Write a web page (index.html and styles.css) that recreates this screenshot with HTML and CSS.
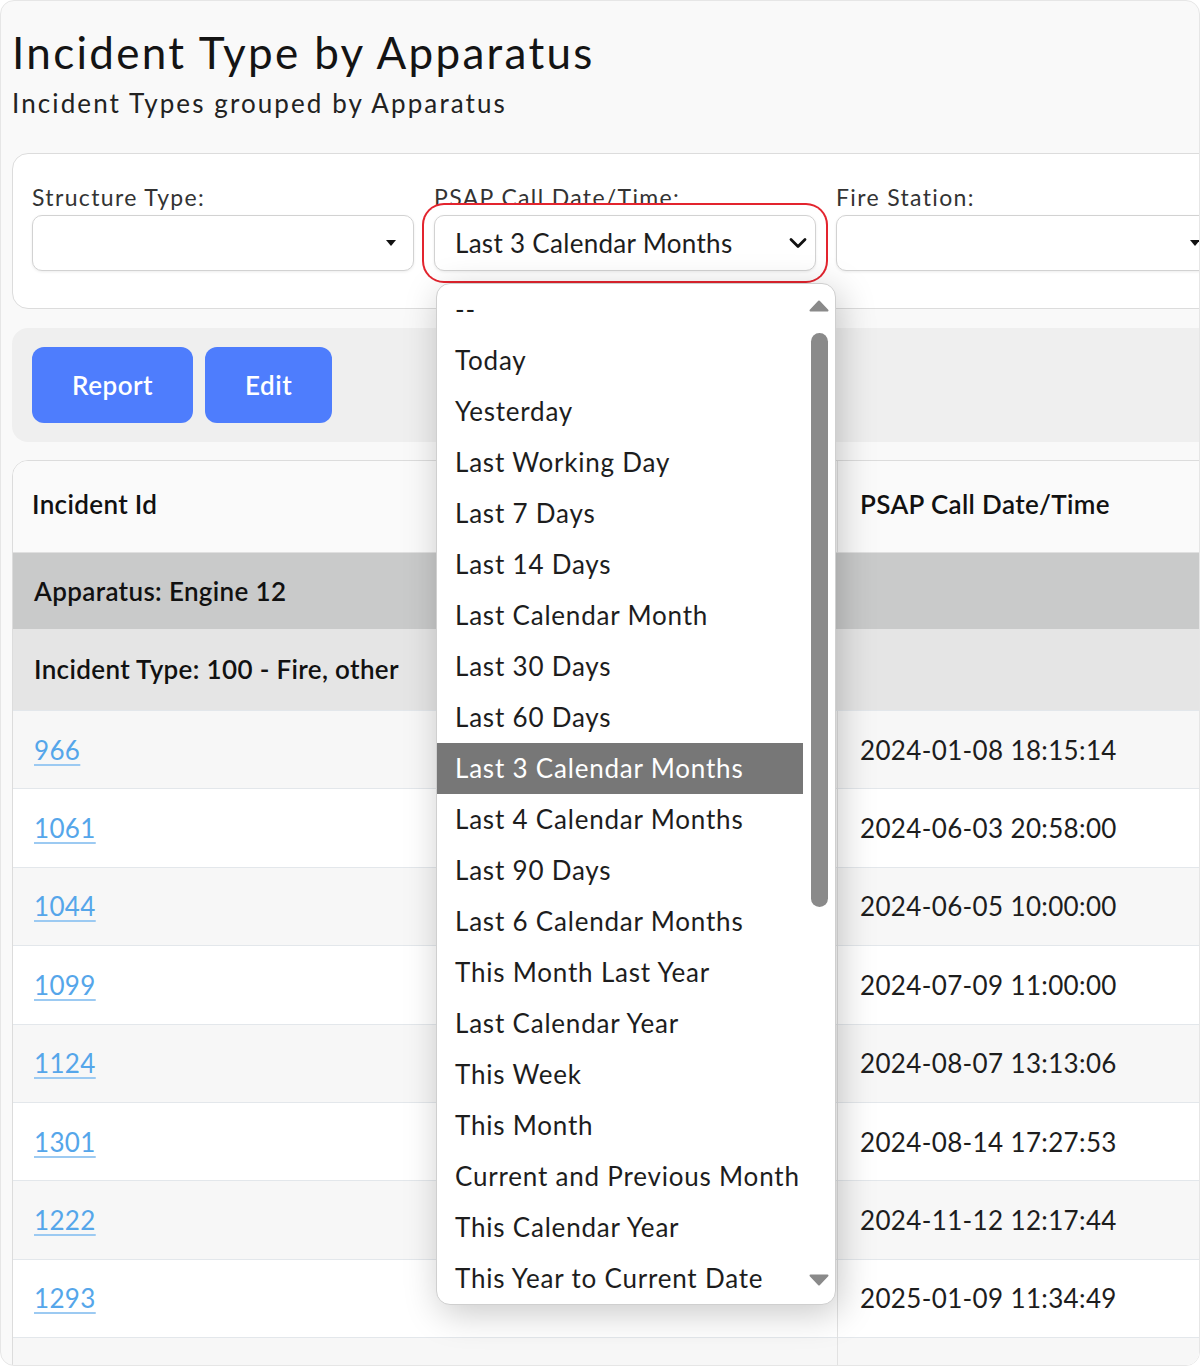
FILE: index.html
```html
<!DOCTYPE html>
<html lang="en">
<head>
    <meta charset="UTF-8">
    <meta name="viewport" content="width=device-width, initial-scale=1.0">
    <title>Incident Type by Apparatus</title>
    <link rel="stylesheet" href="styles.css">
</head>
<body>
    <div class="page">
        <h1 class="title">Incident Type by Apparatus</h1>
        <p class="subtitle">Incident Types grouped by Apparatus</p>

        <!-- report filters -->
        <div class="filters">
            <div class="field">
                <label>Structure Type:</label>
                <div class="select"><span class="caret"></span></div>
            </div>
            <div class="field">
                <label>PSAP Call Date/Time:</label>
                <div class="select focused">
                    <span>Last 3 Calendar Months</span>
                    <svg class="chevron" width="18" height="12" viewBox="0 0 18 12"><path d="M2 2.5 L9 9.5 L16 2.5" fill="none" stroke="#111" stroke-width="2.8" stroke-linecap="round" stroke-linejoin="round"/></svg>
                </div>
                <div class="options">
                    <ul class="option-list">
                        <li>--</li>
                        <li>Today</li>
                        <li>Yesterday</li>
                        <li>Last Working Day</li>
                        <li>Last 7 Days</li>
                        <li>Last 14 Days</li>
                        <li>Last Calendar Month</li>
                        <li>Last 30 Days</li>
                        <li>Last 60 Days</li>
                        <li class="selected">Last 3 Calendar Months</li>
                        <li>Last 4 Calendar Months</li>
                        <li>Last 90 Days</li>
                        <li>Last 6 Calendar Months</li>
                        <li>This Month Last Year</li>
                        <li>Last Calendar Year</li>
                        <li>This Week</li>
                        <li>This Month</li>
                        <li>Current and Previous Month</li>
                        <li>This Calendar Year</li>
                        <li>This Year to Current Date</li>
                    </ul>
                    <div class="scrollbar">
                        <svg width="20" height="12" viewBox="0 0 20 12"><path d="M10 1.5 L18.5 10.5 L1.5 10.5 Z" fill="#8a8a8a" stroke="#8a8a8a" stroke-width="2" stroke-linejoin="round"/></svg>
                        <div class="thumb"></div>
                        <div class="track-rest"></div>
                        <svg width="20" height="12" viewBox="0 0 20 12"><path d="M10 10.5 L18.5 1.5 L1.5 1.5 Z" fill="#8a8a8a" stroke="#8a8a8a" stroke-width="2" stroke-linejoin="round"/></svg>
                    </div>
                </div>
            </div>
            <div class="field">
                <label>Fire Station:</label>
                <div class="select"><span class="caret"></span></div>
            </div>
        </div>

        <div class="actions">
            <button class="btn">Report</button>
            <button class="btn">Edit</button>
        </div>

        <div class="table-card">
            <table class="report">
                <thead>
                    <tr>
                        <th class="col-id">Incident Id</th>
                        <th class="col-date">PSAP Call Date/Time</th>
                    </tr>
                </thead>
                <tbody>
                    <tr class="group-apparatus"><td colspan="2">Apparatus: Engine 12</td></tr>
                    <tr class="group-type"><td colspan="2">Incident Type: 100 - Fire, other</td></tr>
                    <tr><td><a href="#">966</a></td><td class="col-date">2024-01-08 18:15:14</td></tr>
                    <tr><td><a href="#">1061</a></td><td class="col-date">2024-06-03 20:58:00</td></tr>
                    <tr><td><a href="#">1044</a></td><td class="col-date">2024-06-05 10:00:00</td></tr>
                    <tr><td><a href="#">1099</a></td><td class="col-date">2024-07-09 11:00:00</td></tr>
                    <tr><td><a href="#">1124</a></td><td class="col-date">2024-08-07 13:13:06</td></tr>
                    <tr><td><a href="#">1301</a></td><td class="col-date">2024-08-14 17:27:53</td></tr>
                    <tr><td><a href="#">1222</a></td><td class="col-date">2024-11-12 12:17:44</td></tr>
                    <tr><td><a href="#">1293</a></td><td class="col-date">2025-01-09 11:34:49</td></tr>
                    <tr><td><a href="#">1324</a></td><td class="col-date">2025-01-21 09:45:12</td></tr>
                </tbody>
            </table>
        </div>
    </div>
</body>
</html>
```

FILE: styles.css
```css
/* styles.css */
body {
    margin: 0;
    background-color: #ffffff;
    font-family: Lato, "Noto Sans", sans-serif;
    color: #1d1d1d;
}

.page {
    width: 1200px;
    height: 1366px;
    box-sizing: border-box;
    border: 1px solid #e6e6e6;
    border-radius: 14px;
    background-color: #f9f9f9;
    overflow: hidden;
    padding: 25px 0 0 11px;
}

.title {
    margin: 0;
    font-size: 44px;
    line-height: 1.2;
    font-weight: 400;
    letter-spacing: 2.3px;
    color: #141414;
}

.subtitle {
    margin: 9px 0 0;
    font-size: 26px;
    line-height: 1.2;
    letter-spacing: 2.1px;
    color: #222;
}

/* filters */
.filters {
    margin-top: 34px;
    width: 1240px;
    background-color: #fff;
    border: 1px solid #dcdcdc;
    border-radius: 16px;
    padding: 29px 19px 37px;
    display: flex;
    gap: 20px;
}

.field {
    width: 382px;
    flex-shrink: 0;
    position: relative;
}

.field label {
    display: block;
    font-size: 23px;
    line-height: 28px;
    letter-spacing: 1.35px;
    color: #333;
    margin-bottom: 4px;
}

.select {
    height: 56px;
    box-sizing: border-box;
    border: 1px solid #d2d2d2;
    border-radius: 10px;
    background-color: #fff;
    box-shadow: 0 1px 3px rgba(0, 0, 0, 0.08);
    display: flex;
    align-items: center;
    justify-content: space-between;
    padding: 0 17px 0 20px;
    font-size: 26px;
    letter-spacing: 0.3px;
    color: #1d1d1d;
}

.select.focused {
    position: relative;
    padding-right: 8px;
    box-shadow: 0 1px 3px rgba(0, 0, 0, 0.08), 0 0 0 10px #fff, 0 0 0 12px #e3242e;
}

.caret {
    margin-left: auto;
    width: 0;
    height: 0;
    border-left: 5px solid transparent;
    border-right: 5px solid transparent;
    border-top: 6px solid #111;
}

/* open option list of the date select */
.options {
    position: absolute;
    top: 100px;
    left: 2px;
    z-index: 5;
    width: 400px;
    box-sizing: border-box;
    display: flex;
    background-color: #fff;
    border: 1px solid #cfcfcf;
    border-radius: 14px;
    box-shadow: 4px 8px 36px rgba(0, 0, 0, 0.22);
    overflow: hidden;
}

.option-list {
    list-style: none;
    margin: 0;
    padding: 0;
    width: 366px;
}

.option-list li {
    height: 51px;
    line-height: 51px;
    padding-left: 18px;
    font-size: 26px;
    letter-spacing: 0.8px;
    color: #1d1d1d;
    white-space: nowrap;
}

.option-list li.selected {
    background-color: #777;
    color: #fff;
}

.scrollbar {
    flex: 1;
    display: flex;
    flex-direction: column;
    align-items: center;
    padding: 16px 0 18px;
}

.thumb {
    margin-top: 21px;
    width: 17px;
    height: 574px;
    border-radius: 9px;
    background-color: #8a8a8a;
}

.track-rest {
    flex: 1;
}

/* action bar */
.actions {
    margin-top: 19px;
    width: 1240px;
    background-color: #efefef;
    border-radius: 16px;
    padding: 19px 20px;
    display: flex;
    gap: 12px;
}

.btn {
    height: 76px;
    padding: 0 40px;
    border: none;
    border-radius: 12px;
    background-color: #4e7dfd;
    color: #fff;
    font-family: Lato, "Noto Sans", sans-serif;
    font-size: 26px;
    font-weight: 600;
    letter-spacing: 0.5px;
    cursor: pointer;
}

/* results table */
.table-card {
    margin-top: 18px;
    width: 1240px;
    background-color: #fff;
    border: 1px solid #dcdcdc;
    border-radius: 16px;
    overflow: hidden;
}

.report {
    width: 100%;
    border-collapse: collapse;
    font-size: 26px;
    letter-spacing: 0.35px;
}

.report th {
    height: 87px;
    background-color: #fafafa;
    text-align: left;
    font-weight: 600;
    color: #111;
    padding: 0 19px 4px;
    border-bottom: 1px solid #e0e0e0;
}

.report .col-id {
    width: 786px;
}

.report .col-date {
    border-left: 1px solid #e2e2e2;
    padding-left: 22px;
}

.report td {
    height: 77.4px;
    padding: 0 21px;
    border-top: 1px solid #e3e7eb;
    white-space: nowrap;
}

.report tbody tr:nth-child(odd) td {
    background-color: #f7f7f7;
}

.report tbody tr:nth-child(even) td {
    background-color: #fff;
}

/* grouping rows */
.report tbody tr.group-apparatus td {
    height: 76px;
    background-color: #c9caca;
    font-weight: 600;
    color: #111;
    border-top: none;
}

.report tbody tr.group-type td {
    height: 81px;
    background-color: #e5e5e5;
    font-weight: 600;
    color: #111;
    border-top: none;
}

.report a {
    color: #55a6ea;
    text-decoration: underline;
    text-decoration-color: #9ccaf2;
    text-underline-offset: 4px;
}
```
